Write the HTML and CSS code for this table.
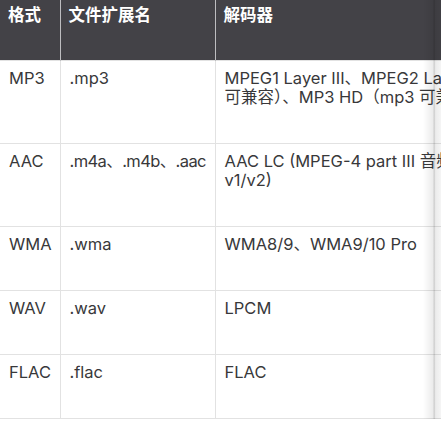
FILE: index.html
```html
<!DOCTYPE html>
<html lang="zh-CN">
<head>
<meta charset="utf-8">
<link rel="stylesheet" href="styles.css">
</head>
<body>
<div class="scroller">
  <table class="codecs">
    <colgroup>
      <col class="c1"><col class="c2"><col class="c3">
    </colgroup>
    <thead>
      <tr><th>格式</th><th>文件扩展名</th><th>解码器</th></tr>
    </thead>
    <tbody>
      <tr><td>MP3</td><td>.mp3</td><td><span class="ln">MPEG1 Layer III、MPEG2 Layer III、MPEG2.5 Layer III（与 MP3</span><span class="ln">可兼容）、MP3 HD（mp3 可兼容）</span></td></tr>
      <tr><td>AAC</td><td class="tight">.m4a、.m4b、.aac</td><td><span class="ln">AAC LC (MPEG-4 part III 音频)、HE-AAC</span><span class="ln">v1/v2)</span></td></tr>
      <tr><td>WMA</td><td>.wma</td><td>WMA8/9、WMA9/10 Pro</td></tr>
      <tr><td>WAV</td><td>.wav</td><td>LPCM</td></tr>
      <tr><td>FLAC</td><td>.flac</td><td>FLAC</td></tr>
    </tbody>
  </table>
  <div class="fade"></div>
</div>
</body>
</html>
```
FILE: styles.css
```css
html, body { margin: 0; padding: 0; background: #fff; }
body { font-family: Inter, "Noto Sans CJK SC", sans-serif; color: #38383a; }
.scroller { position: relative; width: 441px; overflow: hidden; }
.codecs {
  border-collapse: collapse;
  table-layout: fixed;
  width: 660px;
  font-size: 16.5px;
  line-height: 19px;
}
.c1 { width: 60px; }
.c2 { width: 155px; }
.c3 { width: 445px; }
.codecs th, .codecs td {
  text-align: left;
  vertical-align: top;
  white-space: nowrap;
  overflow: hidden;
}
.codecs th {
  background: #434247;
  color: #fff;
  font-weight: 700;
  padding: 6px 8px 35px;
  border-left: 1px solid #bdbdc0;
}
.codecs td {
  padding: 8px 9px 36px;
  border-top: 1px solid #e2e2e2;
  border-bottom: 1px solid #e2e2e2;
  border-left: 1px solid #e2e2e2;
}
.codecs th:first-child, .codecs td:first-child { border-left: none; }
.codecs td.tight { letter-spacing: -0.6px; }
.ln { display: block; }
.fade {
  position: absolute;
  top: 0; right: 0; bottom: 0;
  width: 18px;
  background: linear-gradient(to right, rgba(255,255,255,0) 0%, rgba(0,0,0,0.08) 55%, rgba(0,0,0,0.2) 62%, rgba(0,0,0,0.08) 70%, rgba(0,0,0,0.04) 100%);
}
```
